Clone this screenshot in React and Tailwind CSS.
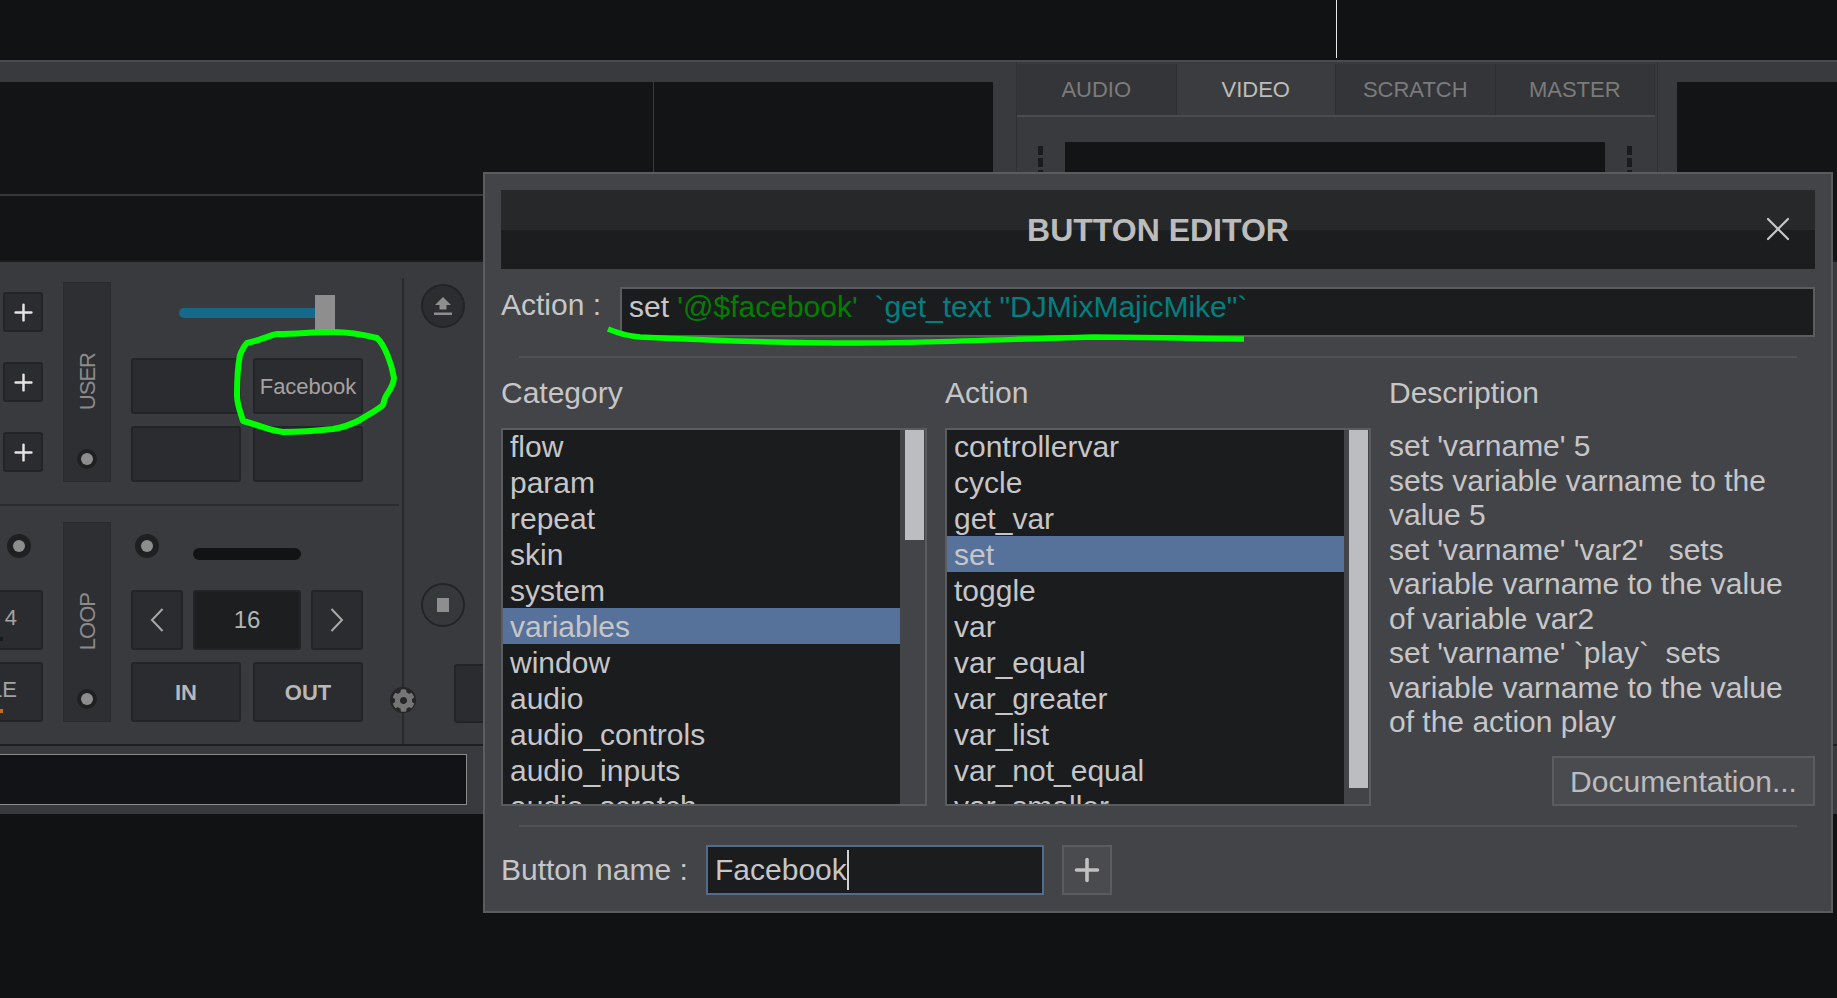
import { X, Plus } from "lucide-react";
import { FaCog } from "react-icons/fa";

const categories = ["flow", "param", "repeat", "skin", "system", "variables", "window", "audio", "audio_controls", "audio_inputs", "audio_scratch"];
const actions = ["controllervar", "cycle", "get_var", "set", "toggle", "var", "var_equal", "var_greater", "var_list", "var_not_equal", "var_smaller"];
const description = [
  "set 'varname' 5",
  "sets variable varname to the",
  "value 5",
  "set 'varname' 'var2'   sets",
  "variable varname to the value",
  "of variable var2",
  "set 'varname' `play`  sets",
  "variable varname to the value",
  "of the action play",
];

const tabs = ["AUDIO", "VIDEO", "SCRATCH", "MASTER"];

const PadButton = ({ children, className = "" }) => (
  <div className={`h-full flex items-center justify-center rounded-[3px] bg-[#2b2c2f] border-2 border-[#232427] text-[#a3a3a3] ${className}`}>
    {children}
  </div>
);

const Led = ({ className = "" }) => (
  <div className={`rounded-full bg-[#1f2022] flex items-center justify-center ${className}`}>
    <div className="w-[12px] h-[12px] rounded-full bg-[#8d8d8d]"></div>
  </div>
);

const SideTab = ({ label }) => (
  <div className="relative w-[48px] h-[200px] flex items-center justify-center bg-[#2e2f32] border border-[#2a2b2d]">
    <span className="[writing-mode:vertical-rl] rotate-180 text-[22px] tracking-[-1px] text-[#8b8b8b]">{label}</span>
    <Led className="absolute bottom-[12px] left-[13px] w-[20px] h-[20px]" />
  </div>
);

const ListBox = ({ items, selected, thumb }) => (
  <div className="w-full h-[378px] border-2 border-[#5b5c60] flex overflow-hidden">
    <div className="flex-1 bg-[#1b1c1e] overflow-hidden">
      <div className="-mt-[2px]">
        {items.map((item) => (
          <div
            key={item}
            className={`h-[36px] leading-[38px] pl-[7px] text-[30px] text-[#c6c6c8] ${item === selected ? "bg-[#56719a]" : ""}`}
          >
            {item}
          </div>
        ))}
      </div>
    </div>
    <div className="w-[25px] pl-[5px]">
      <div className={`bg-[#bcbdc1] w-[19px] ${thumb}`}></div>
    </div>
  </div>
);

const ButtonEditor = () => (
  <div className="absolute left-[483px] top-[172px] w-[1350px] h-[741px] bg-[#434447] border-2 border-[#5b5c60] pt-[16px] px-[16px] text-[#c6c6c8]">
    <div className="relative h-[79px] flex items-center justify-center bg-[linear-gradient(#272829_50%,#1c1d1e_50%)]">
      <h1 className="text-[32px] font-bold text-[#bcbcbc]">BUTTON EDITOR</h1>
      <X size={40} strokeWidth={1.3} className="absolute right-[17px] top-[19px] text-[#c8c8c8]" />
    </div>

    <div className="flex mt-[18px] h-[50px]">
      <span className="w-[119px] text-[30px] leading-[36px]">Action :</span>
      <div className="flex-1 h-full bg-[#1b1c1e] border-2 border-[#5b5c60] pl-[7px] text-[30px] leading-[36px] whitespace-pre">
        set <span className="text-[#008000]">'@$facebook'</span>
        <span className="text-[#008080]">{"  `get_text \"DJMixMajicMike\"`"}</span>
      </div>
    </div>

    <div className="h-[2px] bg-[#505155] mt-[19px] mx-[18px]"></div>

    <div className="flex mt-[17px]">
      <div className="w-[426px]">
        <div className="text-[30px] leading-[36px]">Category</div>
        <div className="mt-[17px]">
          <ListBox items={categories} selected="variables" thumb="h-[110px]" />
        </div>
      </div>
      <div className="w-[426px] ml-[18px]">
        <div className="text-[30px] leading-[36px]">Action</div>
        <div className="mt-[17px]">
          <ListBox items={actions} selected="set" thumb="h-[358px]" />
        </div>
      </div>
      <div className="flex-1 ml-[18px] flex flex-col">
        <div className="text-[30px] leading-[36px]">Description</div>
        <div className="mt-[17px] pt-[1px] text-[30px] leading-[34.5px] whitespace-pre">
          {description.map((line, i) => (
            <div key={i}>{line}</div>
          ))}
        </div>
        <div className="mt-auto self-end w-[263px] h-[50px] bg-[#4a4b4f] border-2 border-[#5b5c60] flex items-center justify-center text-[30px] text-[#bcbcbe]">
          Documentation...
        </div>
      </div>
    </div>

    <div className="h-[2px] bg-[#505155] mt-[19px] mx-[18px]"></div>

    <div className="flex items-center mt-[18px]">
      <span className="w-[205px] text-[30px] leading-[36px]">Button name :</span>
      <div className="w-[338px] h-[50px] bg-[#1b1c1e] border-2 border-[#4f6c93] pl-[7px] flex items-center text-[30px] leading-[36px]">
        <span>Facebook</span>
        <div className="w-[2px] h-[40px] bg-[#d0d0d0]"></div>
      </div>
      <div className="ml-[18px] w-[50px] h-[50px] bg-[#4a4b4f] border-2 border-[#5b5c60] flex items-center justify-center">
        <Plus size={36} strokeWidth={2.4} className="text-[#c0c0c0]" />
      </div>
    </div>
  </div>
);

const Deck = () => (
  <div className="flex h-[484px] border-t-2 border-[#1a1b1d]">
    <div className="w-[399px] flex flex-col shrink-0">
      <div className="h-[244px] pt-[20px] border-b-2 border-[#2b2c2e] flex">
        <div className="ml-[3px] w-[40px] mt-[10px] flex flex-col gap-[30px]">
          {[0, 1, 2].map((i) => (
            <div key={i} className="h-[40px] flex items-center justify-center rounded-[3px] bg-[#2b2c2f] border-2 border-[#232427]">
              <Plus size={27} strokeWidth={2.2} className="text-[#e4e4e4]" />
            </div>
          ))}
        </div>
        <div className="ml-[20px]"><SideTab label="USER" /></div>
        <div className="ml-[20px] w-[232px]">
          <div className="h-[76px] pt-[13px] flex">
            <div className="ml-[48px] w-[140px] h-[10px] mt-[13px] rounded-l-full bg-[#15698a]"></div>
            <div className="-ml-[4px] w-[20px] h-[40px] bg-[#8e8e8e]"></div>
          </div>
          <div className="grid grid-cols-2 grid-rows-2 gap-[12px] h-[124px]">
            <PadButton />
            <PadButton className="text-[22px]">Facebook</PadButton>
            <PadButton />
            <PadButton />
          </div>
        </div>
      </div>
      <div className="pt-[16px] flex">
        <div className="w-[43px]">
          <div className="h-[68px] pt-[12px] pl-[7px]"><Led className="w-[24px] h-[24px]" /></div>
          <div className="relative h-[60px] rounded-r-[3px] bg-[#2b2c2f] border-2 border-l-0 border-[#232427] flex justify-end pr-[24px] pt-[13px] text-[#a3a3a3] text-[22px] leading-[26px]">
            4
            <div className="absolute left-0 top-[45px] w-[3px] h-[4px] bg-[#17181a]"></div>
          </div>
          <div className="relative h-[60px] mt-[12px] rounded-r-[3px] bg-[#2b2c2f] border-2 border-l-0 border-[#232427] flex justify-end pr-[24px] pt-[13px] text-[#a3a3a3] text-[22px] leading-[26px]">
            LE
            <div className="absolute left-0 top-[45px] w-[3px] h-[4px] bg-[#c96a12]"></div>
          </div>
        </div>
        <div className="ml-[20px]"><SideTab label="LOOP" /></div>
        <div className="ml-[20px] w-[232px]">
          <div className="h-[68px] flex">
            <div className="pt-[12px] ml-[4px]"><Led className="w-[24px] h-[24px]" /></div>
            <div className="ml-[34px] mt-[26px] w-[108px] h-[12px] rounded-full bg-[#121315]"></div>
          </div>
          <div className="h-[60px] flex gap-[10px]">
            <PadButton className="w-[52px]">
              <svg width="14" height="24" viewBox="0 0 14 24" fill="none" stroke="#a9a9a9" strokeWidth="2"><path d="M12.5 1 L2 12 L12.5 23" /></svg>
            </PadButton>
            <PadButton className="w-[108px] !bg-[#1d1e20] !text-[#b4b4b4] text-[24px]">16</PadButton>
            <PadButton className="w-[52px]">
              <svg width="14" height="24" viewBox="0 0 14 24" fill="none" stroke="#a9a9a9" strokeWidth="2"><path d="M1.5 1 L12 12 L1.5 23" /></svg>
            </PadButton>
          </div>
          <div className="h-[60px] mt-[12px] grid grid-cols-2 gap-x-[12px] text-[22px] font-bold">
            <PadButton className="!text-[#b8b8b8]">IN</PadButton>
            <PadButton className="!text-[#b8b8b8]">OUT</PadButton>
          </div>
        </div>
      </div>
    </div>
    <div className="relative w-[2px] mt-[16px] ml-[3px] bg-[#28292b] shrink-0">
      <div className="absolute -left-[12px] top-[409px] w-[26px] h-[26px] rounded-full bg-[#242527] flex items-center justify-center">
        <FaCog size={23} className="text-[#757575]" />
      </div>
    </div>
    <div className="flex-1 pl-[17px] flex flex-col">
      <div className="mt-[22px] w-[44px] h-[44px] rounded-full bg-[#2c2d30] border-2 border-[#232427] flex items-center justify-center">
        <svg width="20" height="20" viewBox="0 0 20 20" fill="#8e8e8e">
          <path d="M10 1 L18 9 H13.5 V13.5 H6.5 V9 H2 Z" />
          <rect x="1" y="16.5" width="18" height="2.5" />
        </svg>
      </div>
      <div className="mt-[255px] w-[44px] h-[44px] rounded-full bg-[#37383b] border-2 border-[#232427] flex items-center justify-center">
        <div className="w-[12px] h-[14px] bg-[#8e8e8e]"></div>
      </div>
      <div className="mt-[37px] ml-[33px] w-[60px] h-[59px] rounded-[3px] bg-[#2b2c2f] border-2 border-[#232427]"></div>
    </div>
  </div>
);

export default function App() {
  return (
    <div className="relative w-full h-[998px] overflow-hidden bg-[#111214] font-['Liberation_Sans',Arial,sans-serif]">
      <div className="h-[58px] pl-[1336px]">
        <div className="w-px h-full bg-[#e8e8e8]"></div>
      </div>

      <div className="mt-[2px] h-[754px] bg-[#393a3d] border-t-2 border-[#4a4b4f]">
        {/* waveform row + center tabs */}
        <div className="h-[198px] flex">
          <div className="w-[993px] mt-[20px] flex flex-col bg-[#131416]">
            <div className="h-[112px] flex">
              <div className="w-[654px] border-r border-[#3a3b3e]"></div>
            </div>
            <div className="h-[2px] bg-[#37383b]"></div>
          </div>
          <div className="ml-[23px] w-[642px] h-full border-x border-[#2f3033]">
            <div className="flex mt-[2px] h-[53px] border-b-2 border-[#4a4b4f] mr-[2px]">
              {tabs.map((t) => (
                <div
                  key={t}
                  className={`flex-1 flex items-center justify-center text-[22px] border-r border-[#2d2e30] ${t === "VIDEO" ? "bg-[#3b3c3f] text-[#bdbdbd]" : "bg-[#343538] text-[#7b7b7b]"}`}
                >
                  {t}
                </div>
              ))}
            </div>
            <div className="flex mt-[25px]">
              <div className="w-[48px] pl-[21px] pt-[4px] flex flex-col gap-[3px]">
                <div className="w-[5px] h-[9px] bg-[#1a1b1d]"></div>
                <div className="w-[5px] h-[9px] bg-[#1a1b1d]"></div>
                <div className="w-[5px] h-[9px] bg-[#1a1b1d]"></div>
              </div>
              <div className="w-[540px] h-[60px] bg-[#131416]"></div>
              <div className="w-[48px] pl-[22px] pt-[4px] flex flex-col gap-[3px]">
                <div className="w-[5px] h-[9px] bg-[#1a1b1d]"></div>
                <div className="w-[5px] h-[9px] bg-[#1a1b1d]"></div>
                <div className="w-[5px] h-[9px] bg-[#1a1b1d]"></div>
              </div>
            </div>
          </div>
          <div className="flex-1 ml-[19px] mt-[20px] bg-[#131416]"></div>
        </div>

        <Deck />

        <div className="h-[2px] bg-[#1e1f21]"></div>
        <div className="pt-[8px]">
          <div className="w-[467px] h-[51px] bg-[#121316] border border-l-0 border-[#8a8a8a]"></div>
        </div>
      </div>

      <ButtonEditor />

      {/* green marker scribbles on the screenshot */}
      <svg className="absolute inset-0 pointer-events-none" width="1837" height="998" fill="none" stroke="#00ff00" strokeLinecap="round" strokeLinejoin="round">
        <path strokeWidth="6" d="M247 343 C262 340 270 335 277 334 C300 334 310 332 333 332 C350 332 365 335 377 338 C385 345 392 365 394 378 C393 388 387 393 385 398 L383 405 C375 412 365 416 360 420 C350 425 340 428 333 429 C315 431 295 432 283 432 C270 431 262 426 243 421 C240 410 237 405 237 395 C237 380 238 365 240 355 C242 350 244 346 247 343 Z" />
        <path strokeWidth="5.5" strokeLinecap="butt" d="M608 329 C620 334 628 336 640 337 C700 340 780 343 857 343 C920 343 990 340 1092 337 C1150 337 1200 339 1244 339" />
      </svg>
    </div>
  );
}
